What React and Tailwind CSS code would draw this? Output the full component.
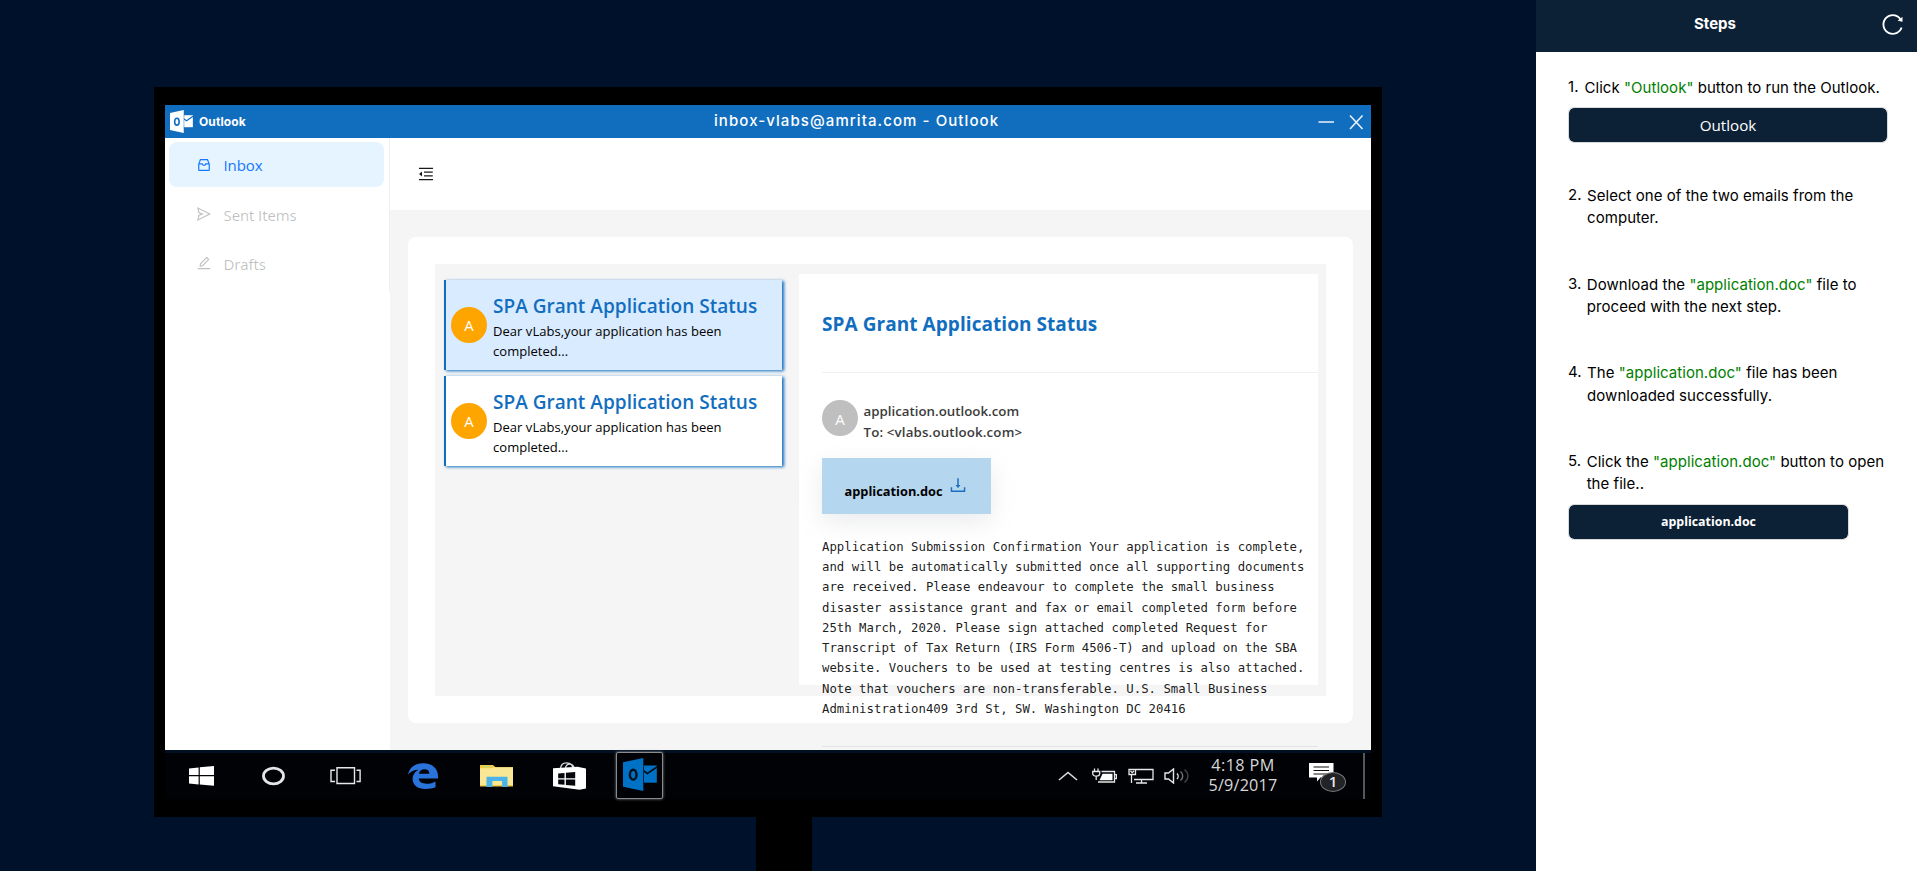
import React from "react";
import {
  AiOutlineInbox,
  AiOutlineSend,
  AiOutlineEdit,
  AiOutlineMenuFold,
  AiOutlineDownload,
  AiOutlineReload,
} from "react-icons/ai";

const OPEN = "font-['Open_Sans',sans-serif]";
const INTER = "font-['Inter',sans-serif]";

function OutlookLogo({ className, fill, ink }) {
  return (
    <svg className={className} viewBox="0 0 34 33" preserveAspectRatio="none">
      <path d="M21 7.500h12.800v17.200H21z" fill={fill} />
      <path d="M20 12.500l4.500 3 9.500-6.500" fill="none" stroke={ink} strokeWidth="1.700" />
      <path d="M0 4.200L20.300 0v33L0 28.800z" fill={fill} />
      <ellipse cx="10.200" cy="16.700" rx="3.300" ry="4.900" fill="none" stroke={ink} strokeWidth="2.400" />
    </svg>
  );
}

function NavItem({ Icon, label, active }) {
  return (
    <div
      className={
        active
          ? "flex h-[45px] items-center rounded-lg bg-[#e6f4ff] pl-[27px] text-[#1677ff]"
          : "flex h-[45px] items-center rounded-lg pl-[27px] text-black/25"
      }
    >
      <Icon className="size-4" />
      <span
        className={
          active
            ? "ml-[11.500px] mt-px text-[15px] leading-5 tracking-[-0.100px]"
            : "ml-[11.500px] mt-[3px] text-[15px] leading-5 tracking-[-0.100px]"
        }
      >
        {label}
      </span>
    </div>
  );
}

function MailCard({ selected }) {
  return (
    <div
      className={
        selected
          ? "flex h-[90px] w-[338px] items-center border-l-2 border-[#116ebf] bg-[#d9ebff] shadow-[2px_1px_3px_0_#116ebf]"
          : "flex h-[90px] w-[338px] items-center border-l-2 border-[#116ebf] bg-white shadow-[2px_1px_3px_0_#116ebf]"
      }
    >
      <div className="ml-[5px] flex size-9 shrink-0 items-center justify-center rounded-full bg-[#ffa500] text-[15px] font-medium text-white">
        A
      </div>
      <div className="mb-px ml-[6px] mt-[2px]">
        <div className="text-[19px] leading-[30px] font-semibold tracking-[0.020px] whitespace-nowrap text-[#116ebf]">
          SPA Grant Application Status
        </div>
        <p className="w-[250px] text-[13px] leading-5 tracking-[0.040px] text-black">
          Dear vLabs,your application has been completed...
        </p>
      </div>
    </div>
  );
}

const BODY = [
  "Application Submission Confirmation Your application is complete,",
  "and will be automatically submitted once all supporting documents",
  "are received. Please endeavour to complete the small business",
  "disaster assistance grant and fax or email completed form before",
  "25th March, 2020. Please sign attached completed Request for",
  "Transcript of Tax Return (IRS Form 4506-T) and upload on the SBA",
  "website. Vouchers to be used at testing centres is also attached.",
  "Note that vouchers are non-transferable. U.S. Small Business",
  "Administration409 3rd St, SW. Washington DC 20416",
].join("\n");

function MailView() {
  return (
    <section className="ml-[17px] mt-[10px] h-[411px] w-[519px] bg-white pl-[23px]">
      <h2 className="flex h-[99px] items-center border-b border-[#f0f0f0] pt-[2px] text-[19px] font-bold tracking-[0.060px] text-[#116ebf]">
        SPA Grant Application Status
      </h2>
      <div className="mt-[27px] flex h-9 items-center">
        <div className="flex size-9 items-center justify-center rounded-full bg-[#bfbfbf] pt-0.5 text-[15px] text-white">
          A
        </div>
        <div className="ml-[5.500px] mt-[7px] text-[13.300px] leading-[21px] font-semibold text-[#3c3c3c]">
          <div>application.outlook.com</div>
          <div className="tracking-[0.150px]">To: &lt;vlabs.outlook.com&gt;</div>
        </div>
      </div>
      <div className="mt-[22px] flex h-14 w-[169px] items-center bg-[#b4d6ef] pl-[22.500px] shadow-[0_8px_24px_rgba(149,157,165,0.2)]">
        <span className="mt-[11px] text-[12.800px] font-bold text-black">application.doc</span>
        <AiOutlineDownload className="mb-0.5 ml-[5px] size-5 text-[#1a6fbf]" />
      </div>
      <pre className="mt-[22.800px] font-['DejaVu_Sans_Mono',monospace] text-[12.330px] leading-[20.250px] text-black/90">
        {BODY}
      </pre>
      <div className="mt-[27px] h-px w-[496px] bg-[#e4e4e4]" />
    </section>
  );
}

function Taskbar() {
  return (
    <footer className="flex h-[49px] items-center border-t-[3px] border-[#001022] bg-[#010206] pl-6">
      <svg className="h-5 w-[25px]" viewBox="0 0 25 20" fill="#fff">
        <path d="M0 2.600L9.600 1.400V9H0zM10.800 1.200L25 0v9H10.800zM0 10.300h9.600v8.300L0 17.400zM10.800 10.300H25V19.800l-14.200-1.200z" />
      </svg>
      <svg className="ml-12 h-5 w-[23px]" viewBox="0 0 23 20">
        <ellipse cx="11.500" cy="10" rx="10" ry="7.900" fill="none" stroke="#e6e6e6" strokeWidth="2.800" />
      </svg>
      <svg className="ml-[45px] h-5 w-[31px]" viewBox="0 0 31 20" fill="none" stroke="#e8e8e8" strokeWidth="1.400">
        <path d="M7 1.700h17.500v15.800H7zM5 4.200H1v11.300h4M26.500 4.200h3.600v11.300h-3.600" />
      </svg>
      <svg className="ml-[47px] h-[26px] w-[30px]" viewBox="0 0 30 26">
        <path
          fill="#2a73da"
          d="M0 11.500C1.500 4.500 7 .3 15.200.3 24.500.3 30 5.800 30 13v2.600H10.800c.3 3.600 3.300 5.100 7.600 5.100 3.600 0 6.500-.9 9.100-2.300v5.900C24.700 25.500 21.400 26 17.600 26 9.400 26 4.600 21.900 4.600 16c0-4.200 2.500-7.500 6.100-9.200C6.300 6.700 2.700 8.500 0 11.500zM10.900 10.700h10.500c-.1-2.900-1.900-4.400-5-4.400-3 0-4.900 1.600-5.500 4.400z"
        />
      </svg>
      <svg className="ml-[42px] h-[22px] w-[33px]" viewBox="0 0 33 22">
        <path d="M0 0h13l2.500 2.200H33V5H0z" fill="#f5cc33" />
        <path d="M3.500.8h8v1.500h-8z" fill="#b9d68a" />
        <path d="M0 3.200h12l2-1h19V21H0z" fill="#fae795" />
        <path d="M0 20h33v1.500H0z" fill="#eecb50" />
        <path d="M6.500 11.800h21V22h-5.400v-6h-9.700v6H6.500z" fill="#4cb3e8" />
      </svg>
      <svg className="ml-10 h-7 w-[33px]" viewBox="0 0 33 28">
        <path d="M7.500 6.500C8 2 11 .8 13.500.8c3 0 5.500 1.500 6 4.200M12.500 6.500c.3-3 2-4.300 4-4.300 2.400 0 4 1.300 4.500 3.300" fill="none" stroke="#ddd" strokeWidth="1.300" />
        <path d="M0 6.200l24.500-1.400L33 6.500v20l-6.500 1.300L0 24.200z" fill="#fff" />
        <path d="M5.200 11.500l6.300-.6v5.300H5.200zM12.900 10.800l9.300-.8v6.200h-9.300zM5.200 17.500h6.300v5.300l-6.300-.6zM12.900 17.500h9.300v6.300l-9.300-.9z" fill="#05060a" />
      </svg>
      <div className="mb-0.5 ml-[30px] flex h-[47px] w-[47px] items-center rounded-[2px] border border-[#8a8b90] bg-[#010206] pl-[6px] shadow-[0_0_3px_#888]">
        <OutlookLogo className="mb-0.5 h-[33px] w-[34px]" fill="#0072c6" ink="#03101c" />
      </div>

      <div className="ml-auto flex h-full items-center text-[#e6e6e6]">
        <svg className="mr-[14px] h-[10px] w-[20px]" viewBox="0 0 20 10" fill="none" stroke="#ddd" strokeWidth="1.600">
          <path d="M1 9l9-7.500L19 9" />
        </svg>
        <svg className="mr-[11px] h-4 w-[25px]" viewBox="0 0 25 16" fill="none" stroke="#e8e8e8" strokeWidth="1.300">
          <path d="M2.500.5v3M6 .5v3M.7 3.500h7v2c0 3.500-7 3.500-7 0zM4.200 8.500V12M6 14h16.500V3.500H9.500M23 6.700h1.400v4H23" />
          <path d="M10.500 5.800h10v6.400H7.500z" fill="#fff" stroke="none" />
        </svg>
        <svg className="mr-[10px] h-4 w-[26px]" viewBox="0 0 26 16" fill="none" stroke="#e8e8e8" strokeWidth="1.300">
          <path d="M8 1.500h17v10H6M1 1.500h6.500v5H1zM3.500 6.500V15M13.500 11.500v3.300M8 15h11M2.500 3l1.700 1.700L6 3" />
        </svg>
        <svg className="h-4 w-[26px]" viewBox="0 0 26 16" fill="none" stroke="#e8e8e8" strokeWidth="1.400">
          <path d="M1 5h3.500L9.500 1v14l-5-4H1z" />
          <path d="M13 5.500c1.500 1.500 1.500 4 0 5.500" />
          <path d="M16.500 3.500c3 2.500 3 6.500 0 9" stroke="#777" />
          <path d="M20.500 1.500c4.500 3.500 4.500 9.500 0 13" stroke="#444" />
        </svg>
        <div className="ml-[17px] w-[72px] pb-[2px] text-center text-[16.200px] leading-5 font-medium text-[#d8d8d8]">
          <div className="whitespace-nowrap tracking-[0.400px]">4:18 PM</div>
          <div className="whitespace-nowrap tracking-[0.200px]">5/9/2017</div>
        </div>
        <div className="relative mb-1 ml-[30px] h-[22px] w-[37px]">
          <svg className="h-[20px] w-[25px]" viewBox="0 0 25 20">
            <path d="M0 0h24.500v14.500H11.500L8 18.500v-4H0z" fill="#fff" />
            <path d="M4.500 4h15.500M4.500 7.500h15.500M4.500 11h15.500" stroke="#111" strokeWidth="1.200" />
          </svg>
          <div className="absolute left-[11px] top-[9px] flex h-5 w-[26px] items-center justify-center rounded-[50%] border border-[#77797c] bg-[#222326] pb-px text-[15px] font-semibold text-[#e8e8e8]">
            1
          </div>
        </div>
        <div className="ml-[17px] mr-[6px] h-full w-[2px] bg-[#55565a]" />
      </div>
    </footer>
  );
}

function OutlookWindow() {
  return (
    <>
      <header className="flex h-[33px] items-center bg-[#116ebf] pl-[5px] pr-[7px] text-white">
        <OutlookLogo className="h-[23px] w-[23px]" fill="#ffffff" ink="#116ebf" />
        <span className={`ml-[6px] w-[180px] text-[12px] font-bold tracking-[0.100px] ${INTER}`}>Outlook</span>
        <span className={`mb-[2px] ml-[335px] text-[15px] leading-5 font-medium tracking-[1.080px] whitespace-nowrap ${INTER}`}>
          inbox-vlabs@amrita.com - Outlook
        </span>
        <svg className="ml-auto h-4 w-[46px]" viewBox="0 0 46 16" fill="none" stroke="#e9f2fa" strokeWidth="1.600">
          <path d="M.5 8H16M32 1.500l12.500 13.500M44.500 1.500L32 15" />
        </svg>
      </header>
      <div className="flex h-[612px] overflow-hidden bg-[#f5f5f5]">
        <aside className="w-[225px] bg-white">
          <nav className="flex h-[153px] flex-col gap-1 border-r border-[#f0f0f0] pl-1 pr-[5px] pt-1">
            <NavItem Icon={AiOutlineInbox} label="Inbox" active />
            <NavItem Icon={AiOutlineSend} label="Sent Items" />
            <NavItem Icon={AiOutlineEdit} label="Drafts" />
          </nav>
        </aside>
        <main className="w-[981px]">
          <div className="flex h-[72px] items-center bg-white pl-[27px]">
            <AiOutlineMenuFold className="size-[18px] text-black/90" />
          </div>
          <div className="ml-[18px] mt-[27px] h-[486px] w-[945px] rounded-lg bg-white p-[27px]">
            <div className="flex h-[432px] w-[891px] bg-[#f5f5f5]">
              <div className="ml-[9px] mt-4 flex flex-col gap-[6px]">
                <MailCard selected />
                <MailCard />
              </div>
              <MailView />
            </div>
          </div>
        </main>
      </div>
    </>
  );
}

function Doc({ children = '"application.doc"' }) {
  return <span className="text-[#008000]">{children}</span>;
}

function Step({ n, first, children }) {
  return (
    <div className="flex h-[45px] text-[15px] leading-[22.400px] tracking-[0.040px]">
      <span className="-mt-px">{n}.</span>
      <p className={first ? "ml-[6px] whitespace-nowrap" : "ml-[5.500px] w-[304px]"}>{children}</p>
    </div>
  );
}

function StepsPanel() {
  return (
    <aside className={`h-[871px] w-[381px] shrink-0 bg-white text-black ${INTER}`}>
      <div className="flex h-[52px] items-center bg-[#0d2136] pr-[12px]">
        <h1 className="-mt-1 ml-[158px] text-[15px] font-bold text-white">Steps</h1>
        <AiOutlineReload className="-mt-[3px] ml-auto size-[25px] text-white" />
      </div>
      <div className="pl-8 pr-[29px] pt-[25px]">
        <div className="h-[108px]">
          <div className="h-[30px]">
            <Step n={1} first>
              Click <Doc>"Outlook"</Doc> button to run the Outlook.
            </Step>
          </div>
          <button className={`flex h-9 w-[320px] items-center justify-center rounded-md border border-[#d9d9d9] bg-[#0d2136] bg-clip-padding text-[15.200px] text-white ${OPEN}`}>
            Outlook
          </button>
        </div>
        <div className="flex flex-col gap-[43.700px]">
          <Step n={2}>Select one of the two emails from the computer.</Step>
          <Step n={3}>
            Download the <Doc /> file to proceed with the next step.
          </Step>
          <Step n={4}>
            The <Doc /> file has been downloaded successfully.
          </Step>
          <Step n={5}>
            Click the <Doc /> button to open the file..
          </Step>
        </div>
        <button className={`mt-2 flex h-9 w-[281px] items-center justify-center rounded-md border border-[#d9d9d9] bg-[#0d2136] bg-clip-padding text-[12.400px] font-bold text-white ${OPEN}`}>
          application.doc
        </button>
      </div>
    </aside>
  );
}

export default function App() {
  return (
    <div className={`flex h-[871px] w-[1917px] overflow-hidden bg-[#00112c] ${OPEN}`}>
      <div className="flex w-[1536px] flex-col pl-[154px] pt-[87px]">
        <div className="h-[730px] w-[1228px] bg-black pl-[11px] pt-[18px]">
          <div className="w-[1206px]">
            <OutlookWindow />
            <Taskbar />
          </div>
        </div>
        <div className="ml-[602px] h-[54px] w-14 bg-black" />
      </div>
      <StepsPanel />
    </div>
  );
}
